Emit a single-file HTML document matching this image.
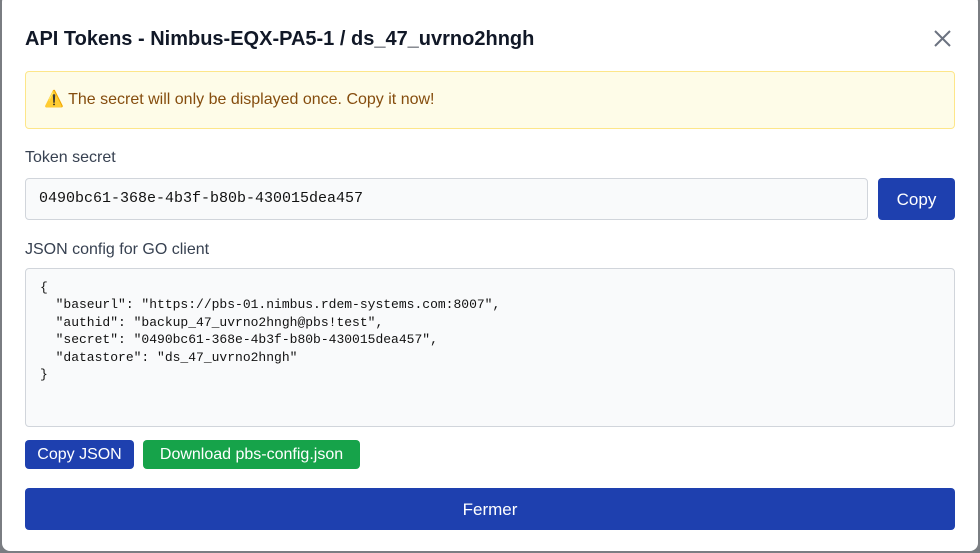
<!DOCTYPE html>
<html><head><style>
body{margin:0;width:980px;height:553px;background:#7a7d82;font-family:"Liberation Sans",sans-serif;overflow:hidden;position:relative}
.m{position:absolute;left:2px;top:-6px;width:976px;height:557px;background:#fff;border-radius:8px}
.a{position:absolute}
h1{position:absolute;left:25px;top:28px;margin:0;font-size:20px;font-weight:bold;color:#111827}
.al{left:25px;top:71px;background:#fefce8;border:1px solid #fde68a;border-radius:4px;color:#854d0e;font-size:16px;line-height:56px;padding-left:18px;box-sizing:border-box;width:930px;height:58px}
.lb{left:25px;font-size:16px;color:#374151}
.in{left:25px;top:178px;width:843px;height:42px;box-sizing:border-box;background:#f9fafb;border:1px solid #d1d5db;border-radius:4px;font-family:"Liberation Mono",monospace;font-size:15px;line-height:40px;padding-left:13px;color:#111}
.bt{color:#fff;border-radius:4px;text-align:center;font-size:16px}
.ta{left:25px;top:268px;width:930px;height:159px;box-sizing:border-box;background:#f9fafb;border:1px solid #d1d5db;border-radius:4px;font-family:"Liberation Mono",monospace;font-size:13px;line-height:17.4px;padding:10px 14px;white-space:pre;color:#111}
</style></head><body>
<div class="m"></div>
<h1>API Tokens - Nimbus-EQX-PA5-1 / ds_47_uvrno2hngh</h1>
<svg class="a" style="left:934px;top:30px" width="17" height="17"><path d="M1 1L16 16M16 1L1 16" stroke="#6b7280" stroke-width="2"/></svg>
<div class="a al">⚠️ The secret will only be displayed once. Copy it now!</div>
<div class="a lb" style="top:149px">Token secret</div>
<div class="a in">0490bc61-368e-4b3f-b80b-430015dea457</div>
<div class="a bt" style="left:878px;top:178px;width:77px;height:42px;line-height:43px;background:#1e40af;font-size:17px">Copy</div>
<div class="a lb" style="top:241px">JSON config for GO client</div>
<div class="a ta">{
  "baseurl": "https://pbs-01.nimbus.rdem-systems.com:8007",
  "authid": "backup_47_uvrno2hngh@pbs!test",
  "secret": "0490bc61-368e-4b3f-b80b-430015dea457",
  "datastore": "ds_47_uvrno2hngh"
}</div>
<div class="a bt" style="left:25px;top:440px;width:109px;height:29px;line-height:29px;background:#1e40af">Copy JSON</div>
<div class="a bt" style="left:143px;top:440px;width:217px;height:29px;line-height:29px;background:#16a34a">Download pbs-config.json</div>
<div class="a bt" style="left:25px;top:488px;width:930px;height:42px;line-height:43px;background:#1e40af;font-size:17px">Fermer</div>
</body></html>
